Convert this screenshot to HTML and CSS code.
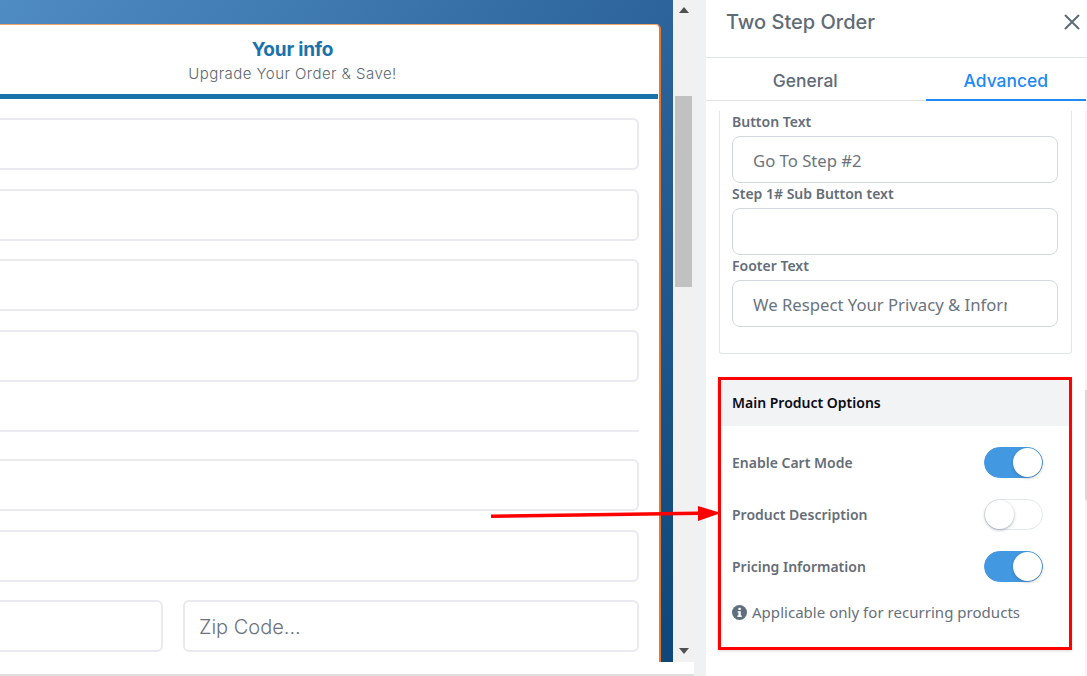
FILE: index.html
```html
<!DOCTYPE html>
<html lang="en">
<head>
<meta charset="utf-8">
<title>Two Step Order</title>
<link rel="stylesheet" href="styles.css">
</head>
<body>
<div class="app">
  <main class="main">
    <div class="stage">
      <div class="canvas">
        <section class="card">
          <header class="card-head">
            <h2 class="card-title">Your info</h2>
            <p class="card-sub">Upgrade Your Order &amp; Save!</p>
          </header>
          <div class="stripe"></div>
          <form class="fields">
            <input class="field" type="text">
            <input class="field" type="text">
            <input class="field" type="text">
            <input class="field" type="text">
            <hr class="divider">
            <input class="field" type="text">
            <input class="field" type="text">
            <div class="split">
              <input class="field" type="text">
              <input class="field" type="text" placeholder="Zip Code...">
            </div>
          </form>
        </section>
      </div>
      <div class="scrollbar">
        <svg class="sb-arrow" width="10" height="6" viewBox="0 0 10 6"><polygon points="5,0 10,6 0,6"/></svg>
        <div class="sb-track"><div class="sb-thumb"></div></div>
        <svg class="sb-arrow" width="10" height="6" viewBox="0 0 10 6"><polygon points="0,0 10,0 5,6"/></svg>
      </div>
    </div>
    <div class="foot"></div>
  </main>

  <aside class="panel">
    <div class="panel-inner">
      <header class="panel-head">
        <h1 class="panel-title">Two Step Order</h1>
        <svg class="close" width="18" height="18" viewBox="0 0 18 18"><path d="M2 2 L16 16 M16 2 L2 16"/></svg>
      </header>
      <nav class="tabs">
        <div class="tab">General</div>
        <div class="tab tab-active">Advanced</div>
      </nav>
      <div class="panel-body">
        <div class="box">
          <label class="label">Button Text</label>
          <input class="text-input" type="text" value="Go To Step #2">
          <label class="label">Step 1# Sub Button text</label>
          <input class="text-input" type="text">
          <label class="label">Footer Text</label>
          <input class="text-input" type="text" value="We Respect Your Privacy &amp; Information">
        </div>
        <section class="options">
          <h3 class="options-head">Main Product Options</h3>
          <div class="options-body">
            <div class="option">
              <span class="option-label">Enable Cart Mode</span>
              <span class="toggle toggle-on"><span class="knob"></span></span>
            </div>
            <div class="option">
              <span class="option-label">Product Description</span>
              <span class="toggle"><span class="knob"></span></span>
            </div>
            <div class="option">
              <span class="option-label">Pricing Information</span>
              <span class="toggle toggle-on"><span class="knob"></span></span>
            </div>
            <p class="note">
              <svg class="info" width="15" height="15" viewBox="0 0 15 15"><circle cx="7.5" cy="7.5" r="7.5"/><rect class="info-i" x="6.4" y="2.8" width="2.4" height="2.2" rx="0.6"/><path class="info-i" d="M5.6 6.2 H8.8 V10.6 H9.8 V12 H5.4 V10.6 H6.4 V7.6 H5.6 Z"/></svg>
              <span>Applicable only for recurring products</span>
            </p>
          </div>
        </section>
      </div>
    </div>
    <div class="panel-scroll"><div class="panel-thumb"></div></div>
  </aside>

  <svg class="arrow" width="240" height="24" viewBox="0 0 240 24">
    <polygon points="1,8.5 208,5.5 208,0 231,7 208,15 208,9 1,12"/>
  </svg>
</div>
</body>
</html>
```

FILE: styles.css
```css
* { box-sizing: border-box; }

html, body {
  margin: 0;
  height: 100%;
  background: #fff;
  overflow: hidden;
}

.app {
  position: relative;
  display: flex;
  width: 1087px;
  height: 676px;
  overflow: hidden;
}

/* left: page preview */
.main {
  width: 694px;
  flex: none;
  display: flex;
  flex-direction: column;
  overflow: hidden;
}

.stage {
  height: 662px;
  display: flex;
}

.canvas {
  width: 673px;
  flex: none;
  padding: 24px 12px 0 0;
  overflow: hidden;
  background: linear-gradient(125deg, #4f8cc3 0%, #2a6299 62%, #0f4678 100%);
}

.card {
  margin-left: -74px;
  height: 800px;
  background: #fff;
  border-top: 1.5px solid #f0a468;
  border-right: 2px solid #e8772e;
  border-top-right-radius: 5px;
}

.card-head {
  height: 69px;
  padding-top: 14px;
  text-align: center;
}

.card-title {
  margin: 0;
  font: 700 19px/22px Inter, sans-serif;
  letter-spacing: -0.2px;
  color: #1a72aa;
}

.card-sub {
  margin: 3px 0 0;
  font: 300 15px/20px Inter, sans-serif;
  letter-spacing: 0.45px;
  color: #5c6670;
}

.stripe {
  height: 5px;
  margin-right: 1px;
  background: #1a72aa;
}

.fields {
  display: flex;
  flex-direction: column;
  gap: 18.7px;
  padding: 19px 20px 0;
}

.field {
  display: block;
  width: 100%;
  height: 52px;
  padding: 1px 14px 0;
  border: 2px solid #e9e9ef;
  border-radius: 6px;
  background: #fff;
  font: 300 20px/1 Inter, sans-serif;
  color: #6b7280;
}

.field::placeholder { color: #6b7280; opacity: 1; }

.divider {
  height: 2px;
  margin: 29px 0 8.4px;
  border: 0;
  background: #ebebf1;
}

.split {
  display: grid;
  grid-template-columns: 1fr 456px;
  gap: 20px;
}

/* scrollbar */
.scrollbar {
  width: 21px;
  flex: none;
  padding: 7px 2px 8px 2px;
  display: flex;
  flex-direction: column;
  align-items: center;
  background: #f1f1f1;
}

.sb-arrow { flex: none; fill: #505050; }

.sb-track {
  flex: 1;
  width: 100%;
  padding-top: 83px;
}

.sb-thumb {
  height: 191px;
  background: #c1c1c1;
}

.foot {
  flex: 1;
  background: #fff;
  border-bottom: 2px solid #dedede;
}

/* right: settings panel */
.panel {
  position: relative;
  width: 393px;
  min-width: 0;
  flex: none;
  padding-left: 12px;
  background: #f0f1f3;
}

.panel-inner {
  height: 100%;
  background: #fff;
}

.panel-head {
  height: 58px;
  display: flex;
  justify-content: space-between;
  padding: 10px 6px 0 20px;
  border-bottom: 1px solid #e2e5ea;
}

.panel-title {
  margin: 0;
  font: 500 20px/25px Inter, sans-serif;
  color: #5f6b76;
}

.close {
  fill: none;
  stroke: #5f6b76;
  stroke-width: 2;
  margin-top: 3px;
}

.tabs {
  display: flex;
  gap: 40px;
  height: 43px;
  padding-left: 19px;
  padding-right: 1px;
  border-bottom: 1px solid #dfe3e8;
}

.tab {
  flex: 1;
  height: 43px;
  padding-top: 10px;
  text-align: center;
  font: 500 17.4px/25px Inter, sans-serif;
  color: #5f6b76;
}

.tab-active {
  color: #2189f3;
  border-bottom: 2px solid #2189f3;
}

.panel-body {
  padding: 10px 15px 0 13px;
}

.box {
  display: flex;
  flex-direction: column;
  height: 243px;
  padding: 0 13px 0 12px;
  border: 1px solid #e2e5ea;
  border-top: 0;
  border-radius: 0 0 3px 3px;
}

.label {
  display: block;
  height: 25px;
  padding-top: 2px;
  font: 600 14px/18px "Noto Sans", sans-serif;
  color: #646d78;
}

.text-input {
  display: block;
  flex: none;
  width: 100%;
  height: 47px;
  padding: 2px 50px 0 20px;
  border: 1px solid #d5d8e0;
  border-radius: 8px;
  background: #fff;
  font: 400 16.7px/1 "Noto Sans", sans-serif;
  color: #6a747e;
}

.options {
  margin: 23px 0 0 -1px;
  width: 354px;
  height: 273px;
  border: 3px solid #f00;
  box-shadow: 0 1px 3px rgba(0, 0, 0, 0.15);
}

.options-head {
  margin: 0;
  height: 46px;
  padding-left: 11px;
  background: #f2f3f5;
  font: 600 14px/46px "Noto Sans", sans-serif;
  color: #0a0a14;
}

.options-body {
  padding: 21px 26px 0 11px;
}

.option {
  display: flex;
  justify-content: space-between;
  align-items: center;
  height: 32px;
  margin-bottom: 20px;
}

.option-label {
  font: 600 14px/18px "Noto Sans", sans-serif;
  color: #646d78;
}

.toggle {
  position: relative;
  width: 59.5px;
  height: 31px;
  margin-top: -1px;
  border: 1px solid #e2e8f0;
  border-radius: 16px;
  background: #fff;
}

.toggle-on {
  background: #4299e1;
  border-color: #4299e1;
}

.knob {
  position: absolute;
  top: 0;
  left: 0;
  width: 29px;
  height: 29px;
  border-radius: 50%;
  background: #fff;
  box-shadow: 0 1px 3px rgba(60, 70, 100, 0.45);
}

.toggle-on .knob { left: 28.5px; }

.note {
  display: flex;
  align-items: center;
  gap: 5px;
  margin: -1px 0 0;
  font: 400 15px/20px "Noto Sans", sans-serif;
  letter-spacing: 0.03px;
  color: #66707a;
}

.info { flex: none; fill: #5f6f7d; }
.info-i { fill: #fff; }

.panel-scroll {
  position: absolute;
  top: 111px;
  right: 0;
  bottom: 0;
  width: 2px;
  background: #f4f4f5;
}

.panel-thumb {
  height: 110px;
  margin-top: 279px;
  background: #d9d9d9;
}

/* annotation over the page */
.arrow {
  position: absolute;
  left: 490px;
  top: 506px;
  fill: #f00;
}
```
